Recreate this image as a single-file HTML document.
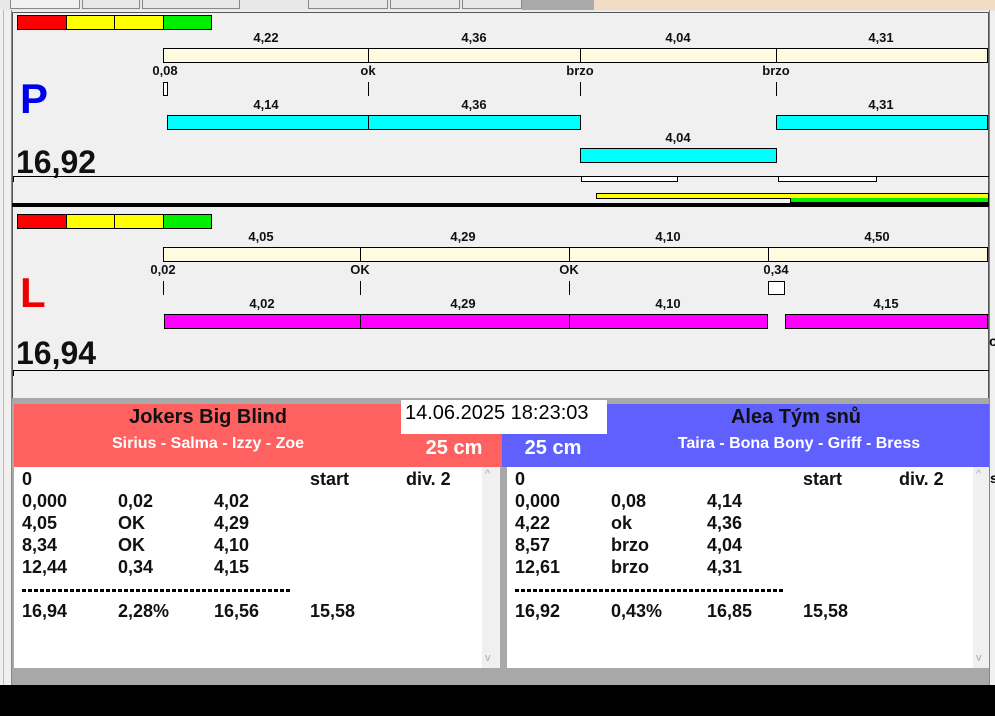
<!DOCTYPE html>
<html><head><meta charset="utf-8"><style>
*{margin:0;padding:0;box-sizing:border-box}
body{width:995px;height:716px;overflow:hidden;background:#f0f0f0;position:relative;font-family:"Liberation Sans",Arial,sans-serif}
div,span{position:absolute}
.t{font-weight:bold;font-size:13px;color:#111;transform:translateX(-50%);white-space:nowrap;line-height:14px}
.b{border:1px solid #000}
.cr{background:#fffbe0}
.cy{background:#00ffff}
.mg{background:#ff00ff}
.tk{width:1px;background:#000}
.r{font-weight:bold;font-size:18px;color:#111;line-height:22px;white-space:nowrap}
.dash{height:3px;background:repeating-linear-gradient(90deg,#000 0 4px,transparent 4px 6px)}
</style></head><body>
<div style="left:0;top:0;width:995px;height:11px;background:#e8e8e8"></div>
<div style="left:10px;top:0;width:70px;height:9px;border:1px solid #888;border-top:none;background:#f0f0f0"></div>
<div style="left:82px;top:0;width:58px;height:9px;border:1px solid #888;border-top:none"></div>
<div style="left:142px;top:0;width:98px;height:9px;border:1px solid #888;border-top:none"></div>
<div style="left:308px;top:0;width:80px;height:9px;border:1px solid #888;border-top:none"></div>
<div style="left:390px;top:0;width:70px;height:9px;border:1px solid #888;border-top:none"></div>
<div style="left:462px;top:0;width:60px;height:9px;border:1px solid #888;border-top:none"></div>
<div style="left:522px;top:0;width:72px;height:10px;background:#aaa"></div>
<div style="left:594px;top:0;width:401px;height:10px;background:#f2dcc4"></div>
<div style="left:0;top:10px;width:12px;height:675px;background:#f0f0f0;border-right:1px solid #888"></div>
<div style="left:3px;top:10px;width:1px;height:675px;background:#bbb"></div>
<div style="left:12px;top:12px;width:977px;height:388px;border:1px solid #555;border-bottom:none;background:#f0f0f0"></div>
<div style="left:989px;top:10px;width:1px;height:675px;background:#6a8bb0"></div>

<div style="left:17px;top:15px;width:50px;height:15px;background:#f00" class="b"></div>
<div style="left:66px;top:15px;width:49px;height:15px;background:#ff0" class="b"></div>
<div style="left:114px;top:15px;width:50px;height:15px;background:#ff0" class="b"></div>
<div style="left:163px;top:15px;width:49px;height:15px;background:#0e0" class="b"></div>
<div class="t" style="left:266px;top:31px">4,22</div>
<div class="t" style="left:474px;top:31px">4,36</div>
<div class="t" style="left:678px;top:31px">4,04</div>
<div class="t" style="left:881px;top:31px">4,31</div>
<div class="b cr" style="left:163px;top:48px;width:825px;height:15px"></div>
<div class="tk" style="left:368px;top:48px;height:15px"></div>
<div class="tk" style="left:580px;top:48px;height:15px"></div>
<div class="tk" style="left:776px;top:48px;height:15px"></div>
<div class="t" style="left:165px;top:64px">0,08</div>
<div class="t" style="left:368px;top:64px">ok</div>
<div class="t" style="left:580px;top:64px">brzo</div>
<div class="t" style="left:776px;top:64px">brzo</div>
<div class="b" style="left:163px;top:82px;width:5px;height:14px;background:#fff"></div>
<div class="tk" style="left:368px;top:82px;height:14px"></div>
<div class="tk" style="left:580px;top:82px;height:14px"></div>
<div class="tk" style="left:776px;top:82px;height:14px"></div>
<div style="left:20px;top:76px;font-size:42px;font-weight:bold;color:#0000ee;line-height:46px">P</div>
<div class="t" style="left:266px;top:98px">4,14</div>
<div class="t" style="left:474px;top:98px">4,36</div>
<div class="t" style="left:881px;top:98px">4,31</div>
<div class="b cy" style="left:167px;top:115px;width:202px;height:15px"></div>
<div class="b cy" style="left:368px;top:115px;width:213px;height:15px"></div>
<div class="b cy" style="left:776px;top:115px;width:212px;height:15px"></div>
<div class="t" style="left:678px;top:131px">4,04</div>
<div class="b cy" style="left:580px;top:148px;width:197px;height:15px"></div>
<div style="left:16px;top:144px;font-size:32px;font-weight:bold;color:#111;line-height:36px">16,92</div>
<div style="left:13px;top:176px;width:976px;height:1px;background:#000"></div>
<div style="left:13px;top:176px;width:1px;height:6px;background:#000"></div>
<div class="b" style="left:581px;top:176px;width:97px;height:6px;background:#fff"></div>
<div class="b" style="left:778px;top:176px;width:99px;height:6px;background:#fff"></div>
<div class="b" style="left:596px;top:193px;width:393px;height:6px;background:#ff0"></div>
<div style="left:790px;top:198px;width:199px;height:5px;background:#0e0;border:1px solid #000;border-top:none"></div>
<div style="left:12px;top:203px;width:977px;height:4px;background:#000"></div>

<div style="left:17px;top:214px;width:50px;height:15px;background:#f00" class="b"></div>
<div style="left:66px;top:214px;width:49px;height:15px;background:#ff0" class="b"></div>
<div style="left:114px;top:214px;width:50px;height:15px;background:#ff0" class="b"></div>
<div style="left:163px;top:214px;width:49px;height:15px;background:#0e0" class="b"></div>
<div class="t" style="left:261px;top:230px">4,05</div>
<div class="t" style="left:463px;top:230px">4,29</div>
<div class="t" style="left:668px;top:230px">4,10</div>
<div class="t" style="left:877px;top:230px">4,50</div>
<div class="b cr" style="left:163px;top:247px;width:825px;height:15px"></div>
<div class="tk" style="left:360px;top:247px;height:15px"></div>
<div class="tk" style="left:569px;top:247px;height:15px"></div>
<div class="tk" style="left:768px;top:247px;height:15px"></div>
<div class="t" style="left:163px;top:263px">0,02</div>
<div class="t" style="left:360px;top:263px">OK</div>
<div class="t" style="left:569px;top:263px">OK</div>
<div class="t" style="left:776px;top:263px">0,34</div>
<div class="tk" style="left:163px;top:281px;height:14px"></div>
<div class="tk" style="left:360px;top:281px;height:14px"></div>
<div class="tk" style="left:569px;top:281px;height:14px"></div>
<div class="b" style="left:768px;top:281px;width:17px;height:14px;background:#fff"></div>
<div style="left:20px;top:270px;font-size:42px;font-weight:bold;color:#ee0000;line-height:46px">L</div>
<div class="t" style="left:262px;top:297px">4,02</div>
<div class="t" style="left:463px;top:297px">4,29</div>
<div class="t" style="left:668px;top:297px">4,10</div>
<div class="t" style="left:886px;top:297px">4,15</div>
<div class="b mg" style="left:164px;top:314px;width:197px;height:15px"></div>
<div class="b mg" style="left:360px;top:314px;width:210px;height:15px"></div>
<div class="b mg" style="left:569px;top:314px;width:199px;height:15px"></div>
<div class="b mg" style="left:785px;top:314px;width:203px;height:15px"></div>
<div style="left:16px;top:335px;font-size:32px;font-weight:bold;color:#111;line-height:36px">16,94</div>
<div style="left:13px;top:370px;width:976px;height:1px;background:#000"></div>
<div style="left:13px;top:370px;width:1px;height:6px;background:#000"></div>
<div style="left:989px;top:333px;font-size:14px;font-weight:bold">o</div>

<div style="left:12px;top:398px;width:977px;height:287px;background:#a8a8a8"></div>
<div style="left:14px;top:404px;width:488px;height:63px;background:#ff6060"></div>
<div style="left:502px;top:404px;width:487px;height:63px;background:#6060ff"></div>
<div style="left:401px;top:400px;width:206px;height:34px;background:#fff"></div>
<div style="left:405px;top:401px;font-size:20px;color:#000;line-height:24px">14.06.2025 18:23:03</div>
<div class="t" style="left:208px;top:405px;font-size:20px;line-height:24px">Jokers Big Blind</div>
<div class="t" style="left:208px;top:434px;font-size:16px;line-height:19px;color:#fff">Sirius - Salma - Izzy - Zoe</div>
<div class="t" style="left:454px;top:436px;font-size:20px;line-height:24px;color:#fff;font-weight:bold">25 cm</div>
<div class="t" style="left:553px;top:436px;font-size:20px;line-height:24px;color:#fff;font-weight:bold">25 cm</div>
<div class="t" style="left:796px;top:405px;font-size:20px;line-height:24px">Alea Tým snů</div>
<div class="t" style="left:799px;top:434px;font-size:16px;line-height:19px;color:#fff">Taira - Bona Bony - Griff - Bress</div>

<div style="left:14px;top:467px;width:486px;height:201px;background:#fff"></div>
<div style="left:482px;top:467px;width:18px;height:201px;background:#f0f0f0"></div>
<div style="left:485px;top:468px;font-size:11px;color:#aaa">^</div>
<div style="left:485px;top:652px;font-size:11px;color:#aaa">v</div>
<div style="left:507px;top:467px;width:482px;height:201px;background:#fff"></div>
<div style="left:973px;top:467px;width:16px;height:201px;background:#f0f0f0"></div>
<div style="left:976px;top:468px;font-size:11px;color:#aaa">^</div>
<div style="left:976px;top:652px;font-size:11px;color:#aaa">v</div>

<div class="r" style="left:22px;top:468px">0</div><div class="r" style="left:310px;top:468px">start</div><div class="r" style="left:406px;top:468px">div. 2</div>
<div class="r" style="left:22px;top:490px">0,000</div><div class="r" style="left:118px;top:490px">0,02</div><div class="r" style="left:214px;top:490px">4,02</div>
<div class="r" style="left:22px;top:512px">4,05</div><div class="r" style="left:118px;top:512px">OK</div><div class="r" style="left:214px;top:512px">4,29</div>
<div class="r" style="left:22px;top:534px">8,34</div><div class="r" style="left:118px;top:534px">OK</div><div class="r" style="left:214px;top:534px">4,10</div>
<div class="r" style="left:22px;top:556px">12,44</div><div class="r" style="left:118px;top:556px">0,34</div><div class="r" style="left:214px;top:556px">4,15</div>
<div class="dash" style="left:22px;top:589px;width:270px"></div>
<div class="r" style="left:22px;top:600px">16,94</div><div class="r" style="left:118px;top:600px">2,28%</div><div class="r" style="left:214px;top:600px">16,56</div><div class="r" style="left:310px;top:600px">15,58</div>

<div class="r" style="left:515px;top:468px">0</div><div class="r" style="left:803px;top:468px">start</div><div class="r" style="left:899px;top:468px">div. 2</div>
<div class="r" style="left:515px;top:490px">0,000</div><div class="r" style="left:611px;top:490px">0,08</div><div class="r" style="left:707px;top:490px">4,14</div>
<div class="r" style="left:515px;top:512px">4,22</div><div class="r" style="left:611px;top:512px">ok</div><div class="r" style="left:707px;top:512px">4,36</div>
<div class="r" style="left:515px;top:534px">8,57</div><div class="r" style="left:611px;top:534px">brzo</div><div class="r" style="left:707px;top:534px">4,04</div>
<div class="r" style="left:515px;top:556px">12,61</div><div class="r" style="left:611px;top:556px">brzo</div><div class="r" style="left:707px;top:556px">4,31</div>
<div class="dash" style="left:515px;top:589px;width:270px"></div>
<div class="r" style="left:515px;top:600px">16,92</div><div class="r" style="left:611px;top:600px">0,43%</div><div class="r" style="left:707px;top:600px">16,85</div><div class="r" style="left:803px;top:600px">15,58</div>

<div style="left:990px;top:470px;font-size:14px;font-weight:bold">s</div>
<div style="left:0;top:685px;width:995px;height:31px;background:#000"></div>
</body></html>
